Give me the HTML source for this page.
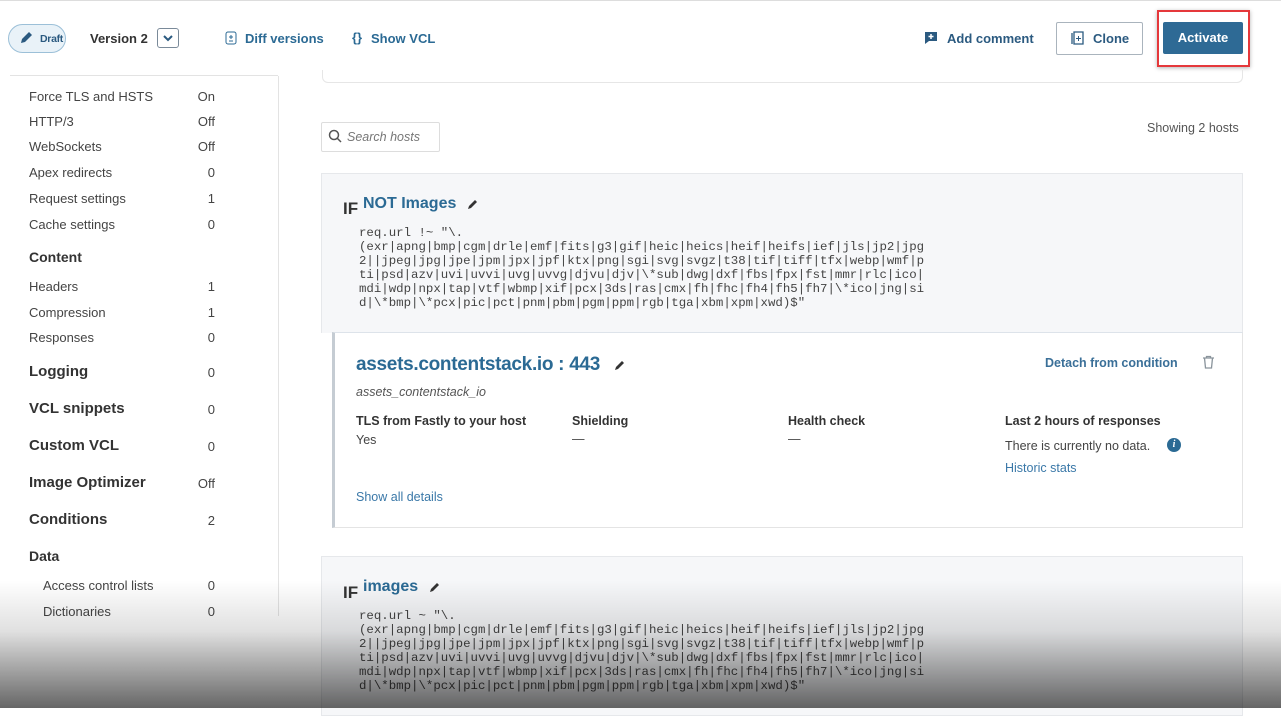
<!DOCTYPE html>
<html><head><meta charset="utf-8"><style>
*{box-sizing:border-box;margin:0;padding:0}
body{width:1281px;height:708px;overflow:hidden;background:#fff;font-family:"Liberation Sans",sans-serif;color:#333;position:relative}
.a{position:absolute;white-space:nowrap}
.blue{color:#2b6a94}
.side{font-size:13px;color:#444}
.side .v{position:absolute;left:0;width:215px;text-align:right}
.h{font-size:15px;font-weight:bold;color:#333}
pre.a{font-family:"Liberation Mono",monospace;font-size:12.4px;line-height:14px;color:#444;white-space:pre}
.if{font-weight:bold;font-size:17px;color:#333}
.ttl{font-weight:bold;font-size:16px;color:#2b6a94}
</style></head><body>
<div class="a" style="left:0;top:0;width:1281px;height:1px;background:#ddd"></div>
<div class="a" style="left:8px;top:24px;width:58px;height:29px;border:1px solid #9cc0d8;border-radius:15px;background:#e9f2f8"></div>
<svg class="a" style="left:19px;top:31px" width="14" height="14" viewBox="0 0 14 14"><path d="M2 12l1-4 7-7 3 3-7 7z" fill="#2b5a80"/></svg>
<div class="a" style="left:40px;top:33px;font-size:10.5px;color:#2b5a80;font-weight:bold;letter-spacing:-0.3px">Draft</div>
<div class="a" style="left:90px;top:31px;font-size:13px;font-weight:bold;color:#333">Version 2</div>
<div class="a" style="left:157px;top:28px;width:22px;height:20px;border:1px solid #7a8a99;border-radius:3px"></div>
<svg class="a" style="left:162px;top:33px" width="12" height="10"><path d="M2 3l4 4 4-4" stroke="#2b5a80" stroke-width="2" fill="none"/></svg>
<svg class="a" style="left:225px;top:31px" width="12" height="14"><rect x="1" y="1" width="10" height="12" rx="2" stroke="#2b6a94" fill="none"/><path d="M6 4v4M4 6h4M4 10h4" stroke="#2b6a94"/></svg>
<div class="a blue" style="left:245px;top:31px;font-size:13px;font-weight:bold">Diff versions</div>
<div class="a blue" style="left:352px;top:30px;font-size:13px;font-weight:bold">{} </div>
<div class="a blue" style="left:371px;top:31px;font-size:13px;font-weight:bold">Show VCL</div>
<svg class="a" style="left:924px;top:31px" width="14" height="13"><path d="M1 1h12v9H5l-4 3z" fill="#2b5a80"/><path d="M7 3v5M4.5 5.5h5" stroke="#fff" stroke-width="1.5"/></svg>
<div class="a blue" style="left:947px;top:31px;font-size:13px;font-weight:bold;color:#2b5a80">Add comment</div>
<div class="a" style="left:1056px;top:22px;width:87px;height:33px;border:1px solid #aab4bd;border-radius:2px"></div>
<svg class="a" style="left:1069px;top:30px" width="16" height="16"><path d="M3 3v11M5 2h9v12H5z" stroke="#2b5a80" fill="none" stroke-width="1.3"/><path d="M9.5 6v5M7 8.5h5" stroke="#2b5a80"/></svg>
<div class="a" style="left:1093px;top:31px;font-size:13px;font-weight:bold;color:#2b5a80">Clone</div>
<div class="a" style="left:1157px;top:10px;width:93px;height:57px;border:2px solid #e5383b;box-shadow:0 1px 4px rgba(0,0,0,.3)"></div>
<div class="a" style="left:1163px;top:22px;width:80px;height:32px;background:#2e6a95;border-radius:2px;color:#fff;font-size:13px;font-weight:bold;text-align:center;line-height:32px">Activate</div>
<div class="a" style="left:10px;top:75px;width:268px;height:1px;background:#e3e3e3"></div>
<div class="a" style="left:278px;top:76px;width:1px;height:540px;background:#e3e3e3"></div>
<div class="a" style="left:322px;top:70px;width:921px;height:13px;border:1px solid #e6e6e6;border-top:none;border-radius:0 0 6px 6px"></div>
<div class="side">
<div class="a" style="left:29px;top:89px">Force TLS and HSTS</div><div class="a v" style="top:89px">On</div>
<div class="a" style="left:29px;top:114px">HTTP/3</div><div class="a v" style="top:114px">Off</div>
<div class="a" style="left:29px;top:139px">WebSockets</div><div class="a v" style="top:139px">Off</div>
<div class="a" style="left:29px;top:165px">Apex redirects</div><div class="a v" style="top:165px">0</div>
<div class="a" style="left:29px;top:191px">Request settings</div><div class="a v" style="top:191px">1</div>
<div class="a" style="left:29px;top:217px">Cache settings</div><div class="a v" style="top:217px">0</div>
<div class="a h" style="left:29px;top:249px;font-size:14px">Content</div>
<div class="a" style="left:29px;top:279px">Headers</div><div class="a v" style="top:279px">1</div>
<div class="a" style="left:29px;top:305px">Compression</div><div class="a v" style="top:305px">1</div>
<div class="a" style="left:29px;top:330px">Responses</div><div class="a v" style="top:330px">0</div>
<div class="a h" style="left:29px;top:363px">Logging</div><div class="a v" style="top:365px">0</div>
<div class="a h" style="left:29px;top:400px">VCL snippets</div><div class="a v" style="top:402px">0</div>
<div class="a h" style="left:29px;top:437px">Custom VCL</div><div class="a v" style="top:439px">0</div>
<div class="a h" style="left:29px;top:474px">Image Optimizer</div><div class="a v" style="top:476px">Off</div>
<div class="a h" style="left:29px;top:511px">Conditions</div><div class="a v" style="top:513px">2</div>
<div class="a h" style="left:29px;top:548px;font-size:14px">Data</div>
<div class="a" style="left:43px;top:578px">Access control lists</div><div class="a v" style="top:578px">0</div>
<div class="a" style="left:43px;top:604px">Dictionaries</div><div class="a v" style="top:604px">0</div>
</div>
<div class="a" style="left:321px;top:122px;width:119px;height:30px;border:1px solid #ddd;border-radius:2px"></div>
<svg class="a" style="left:328px;top:129px" width="14" height="14"><circle cx="6" cy="6" r="4.5" stroke="#555" stroke-width="1.5" fill="none"/><path d="M9 9l4 4" stroke="#555" stroke-width="1.5"/></svg>
<div class="a" style="left:347px;top:130px;font-size:12.5px;font-style:italic;color:#777">Search hosts</div>
<div class="a" style="left:1147px;top:121px;font-size:12.5px;color:#555">Showing 2 hosts</div>

<div class="a" style="left:321px;top:173px;width:922px;height:160px;background:#f6f7f9;border:1px solid #e6e8eb;border-bottom:none"></div>
<div class="a if" style="left:343px;top:199px">IF</div>
<div class="a ttl" style="left:363px;top:195px">NOT Images</div>
<svg class="a" style="left:467px;top:198px" width="12" height="12"><path d="M1 11l1-3 6-6 2 2-6 6z" fill="#333"/></svg>
<pre class="a" style="left:359px;top:226px">req.url !~ "\.
(exr|apng|bmp|cgm|drle|emf|fits|g3|gif|heic|heics|heif|heifs|ief|jls|jp2|jpg
2||jpeg|jpg|jpe|jpm|jpx|jpf|ktx|png|sgi|svg|svgz|t38|tif|tiff|tfx|webp|wmf|p
ti|psd|azv|uvi|uvvi|uvg|uvvg|djvu|djv|\*sub|dwg|dxf|fbs|fpx|fst|mmr|rlc|ico|
mdi|wdp|npx|tap|vtf|wbmp|xif|pcx|3ds|ras|cmx|fh|fhc|fh4|fh5|fh7|\*ico|jng|si
d|\*bmp|\*pcx|pic|pct|pnm|pbm|pgm|ppm|rgb|tga|xbm|xpm|xwd)$"</pre>

<div class="a" style="left:332px;top:332px;width:911px;height:196px;border:1px solid #e4e4e4;border-left:3px solid #c5ccd3;border-top:1px solid #dde3ea"></div>
<div class="a" style="left:356px;top:354px;font-size:19px;font-weight:bold;color:#2b6a94;letter-spacing:-0.3px">assets.contentstack.io : 443</div>
<svg class="a" style="left:614px;top:359px" width="12" height="12"><path d="M1 11l1-3 6-6 2 2-6 6z" fill="#333"/></svg>
<div class="a" style="left:356px;top:385px;font-size:12.5px;font-style:italic;color:#555">assets_contentstack_io</div>
<div class="a" style="left:356px;top:414px;font-size:12.5px;font-weight:bold;color:#333">TLS from Fastly to your host</div>
<div class="a" style="left:356px;top:433px;font-size:12.5px;color:#444">Yes</div>
<div class="a" style="left:572px;top:414px;font-size:12.5px;font-weight:bold;color:#333">Shielding</div>
<div class="a" style="left:572px;top:432px;font-size:12.5px;color:#444">—</div>
<div class="a" style="left:788px;top:414px;font-size:12.5px;font-weight:bold;color:#333">Health check</div>
<div class="a" style="left:788px;top:432px;font-size:12.5px;color:#444">—</div>
<div class="a blue" style="left:1045px;top:356px;font-size:12.5px;font-weight:bold;color:#3a6f98">Detach from condition</div>
<svg class="a" style="left:1202px;top:355px" width="13" height="14"><path d="M1 3h11M4.5 3V1.5h4V3M2.5 3l1 10h6l1-10" stroke="#8a949c" fill="none" stroke-width="1.3"/></svg>
<div class="a" style="left:1005px;top:414px;font-size:12.5px;font-weight:bold;color:#333">Last 2 hours of responses</div>
<div class="a" style="left:1005px;top:439px;font-size:12.5px;color:#444">There is currently no data.</div>
<div class="a" style="left:1167px;top:438px;width:14px;height:14px;border-radius:7px;background:#2b6a94;color:#fff;font-size:10px;font-weight:bold;font-style:italic;text-align:center;line-height:14px;font-family:'Liberation Serif',serif">i</div>
<div class="a" style="left:1005px;top:461px;font-size:12.5px;color:#3a78a8">Historic stats</div>
<div class="a" style="left:356px;top:490px;font-size:12.5px;color:#3a78a8">Show all details</div>

<div class="a" style="left:321px;top:556px;width:922px;height:160px;background:#f6f7f9;border:1px solid #e6e8eb"></div>
<div class="a if" style="left:343px;top:583px">IF</div>
<div class="a ttl" style="left:363px;top:578px">images</div>
<svg class="a" style="left:429px;top:581px" width="12" height="12"><path d="M1 11l1-3 6-6 2 2-6 6z" fill="#333"/></svg>
<pre class="a" style="left:359px;top:609px">req.url ~ "\.
(exr|apng|bmp|cgm|drle|emf|fits|g3|gif|heic|heics|heif|heifs|ief|jls|jp2|jpg
2||jpeg|jpg|jpe|jpm|jpx|jpf|ktx|png|sgi|svg|svgz|t38|tif|tiff|tfx|webp|wmf|p
ti|psd|azv|uvi|uvvi|uvg|uvvg|djvu|djv|\*sub|dwg|dxf|fbs|fpx|fst|mmr|rlc|ico|
mdi|wdp|npx|tap|vtf|wbmp|xif|pcx|3ds|ras|cmx|fh|fhc|fh4|fh5|fh7|\*ico|jng|si
d|\*bmp|\*pcx|pic|pct|pnm|pbm|pgm|ppm|rgb|tga|xbm|xpm|xwd)$"</pre>
<div class="a" style="left:0;top:580px;width:1281px;height:128px;background:linear-gradient(to bottom,rgba(0,0,0,0),rgba(0,0,0,.12) 40%,rgba(0,0,0,.6))"></div>
</body></html>
